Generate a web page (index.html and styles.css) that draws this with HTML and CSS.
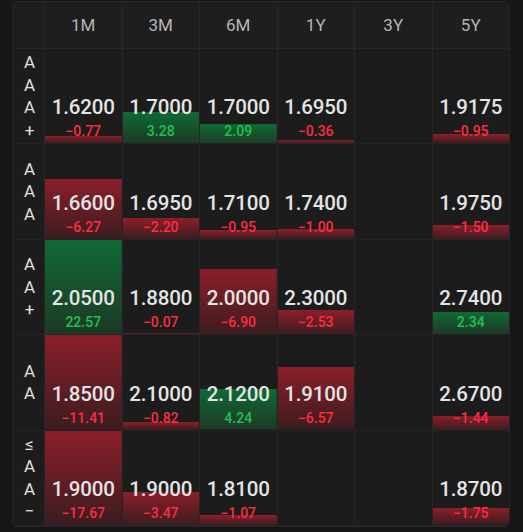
FILE: index.html
```html
<!DOCTYPE html>
<html>
<head>
<meta charset="utf-8">
<link rel="stylesheet" href="styles.css">
</head>
<body>
<div class="panel">
  <div class="hcell corner"></div>
  <div class="hcell">1M</div>
  <div class="hcell">3M</div>
  <div class="hcell">6M</div>
  <div class="hcell">1Y</div>
  <div class="hcell">3Y</div>
  <div class="hcell">5Y</div>

  <div class="label"><span>A</span><span>A</span><span>A</span><span>+</span></div>
  <div class="cell down" style="--h:7.3px"><div class="val">1.6200</div><div class="chg">−0.77</div></div>
  <div class="cell up" style="--h:31.2px"><div class="val">1.7000</div><div class="chg">3.28</div></div>
  <div class="cell up" style="--h:19.9px"><div class="val">1.7000</div><div class="chg">2.09</div></div>
  <div class="cell down" style="--h:3.4px"><div class="val">1.6950</div><div class="chg">−0.36</div></div>
  <div class="cell"></div>
  <div class="cell down" style="--h:9px"><div class="val">1.9175</div><div class="chg">−0.95</div></div>

  <div class="label"><span>A</span><span>A</span><span>A</span></div>
  <div class="cell down" style="--h:59.6px"><div class="val">1.6600</div><div class="chg">−6.27</div></div>
  <div class="cell down" style="--h:20.9px"><div class="val">1.6950</div><div class="chg">−2.20</div></div>
  <div class="cell down" style="--h:9px"><div class="val">1.7100</div><div class="chg">−0.95</div></div>
  <div class="cell down" style="--h:9.5px"><div class="val">1.7400</div><div class="chg">−1.00</div></div>
  <div class="cell"></div>
  <div class="cell down" style="--h:14.3px"><div class="val">1.9750</div><div class="chg">−1.50</div></div>

  <div class="label"><span>A</span><span>A</span><span>+</span></div>
  <div class="cell up" style="--h:100%"><div class="val">2.0500</div><div class="chg">22.57</div></div>
  <div class="cell down" style="--h:1px"><div class="val">1.8800</div><div class="chg">−0.07</div></div>
  <div class="cell down" style="--h:65.6px"><div class="val">2.0000</div><div class="chg">−6.90</div></div>
  <div class="cell down" style="--h:24px"><div class="val">2.3000</div><div class="chg">−2.53</div></div>
  <div class="cell"></div>
  <div class="cell up" style="--h:22.2px"><div class="val">2.7400</div><div class="chg">2.34</div></div>

  <div class="label"><span>A</span><span>A</span></div>
  <div class="cell down" style="--h:100%"><div class="val">1.8500</div><div class="chg">−11.41</div></div>
  <div class="cell down" style="--h:7.8px"><div class="val">2.1000</div><div class="chg">−0.82</div></div>
  <div class="cell up" style="--h:40.3px"><div class="val">2.1200</div><div class="chg">4.24</div></div>
  <div class="cell down" style="--h:62.4px"><div class="val">1.9100</div><div class="chg">−6.57</div></div>
  <div class="cell"></div>
  <div class="cell down" style="--h:13.7px"><div class="val">2.6700</div><div class="chg">−1.44</div></div>

  <div class="label"><span>≤</span><span>A</span><span>A</span><span>−</span></div>
  <div class="cell down" style="--h:100%"><div class="val">1.9000</div><div class="chg">−17.67</div></div>
  <div class="cell down" style="--h:33px"><div class="val">1.9000</div><div class="chg">−3.47</div></div>
  <div class="cell down" style="--h:10.2px"><div class="val">1.8100</div><div class="chg">−1.07</div></div>
  <div class="cell"></div>
  <div class="cell"></div>
  <div class="cell down" style="--h:16.6px"><div class="val">1.8700</div><div class="chg">−1.75</div></div>
</div>
</body>
</html>
```

FILE: styles.css
```css
html, body {
  margin: 0;
  background: #171717;
}
body {
  padding: 1px 0 0 12px;
  width: 523px;
  height: 532px;
  box-sizing: border-box;
  font-family: Roboto, "Noto Sans", sans-serif;
}
.panel {
  width: 498px;
  height: 526px;
  box-sizing: border-box;
  border: 1px solid #262626;
  border-radius: 5px;
  background: #1c1c1c;
  overflow: hidden;
  display: grid;
  grid-template-columns: 31px repeat(6, 1fr);
  grid-template-rows: 47px repeat(5, 1fr);
}
.hcell {
  display: flex;
  align-items: center;
  justify-content: center;
  color: #b5b5b5;
  font-size: 17px;
  background: #1e1e1e;
  border-left: 1px solid #262626;
  border-bottom: 1px solid #262626;
}
.hcell.corner {
  border-left: none;
}
.label {
  display: flex;
  flex-direction: column;
  align-items: center;
  justify-content: center;
  color: #e0e0e0;
  font-size: 17px;
  line-height: 22.5px;
  border-bottom: 1px solid #242424;
  padding-left: 2px;
}
.cell {
  display: flex;
  flex-direction: column;
  align-items: center;
  justify-content: flex-end;
  padding-bottom: 3px;
  border-left: 1px solid #262626;
  border-bottom: 1px solid #242424;
  background-repeat: no-repeat;
  background-position: bottom;
  background-size: 100% var(--h);
}
.cell.down {
  background-image: linear-gradient(to bottom, #8c1e2a, #3b1d21);
}
.cell.up {
  background-image: linear-gradient(to bottom, #0f6a35, #1e3926);
}
.val {
  font-size: 20.5px;
  font-weight: 500;
  letter-spacing: -0.2px;
  line-height: 24px;
  color: #e4e4e4;
  margin-bottom: 4px;
}
.chg {
  font-size: 14px;
  font-weight: 500;
  line-height: 17px;
  color: #ff2c3e;
}
.up .chg {
  color: #22c050;
}
```
